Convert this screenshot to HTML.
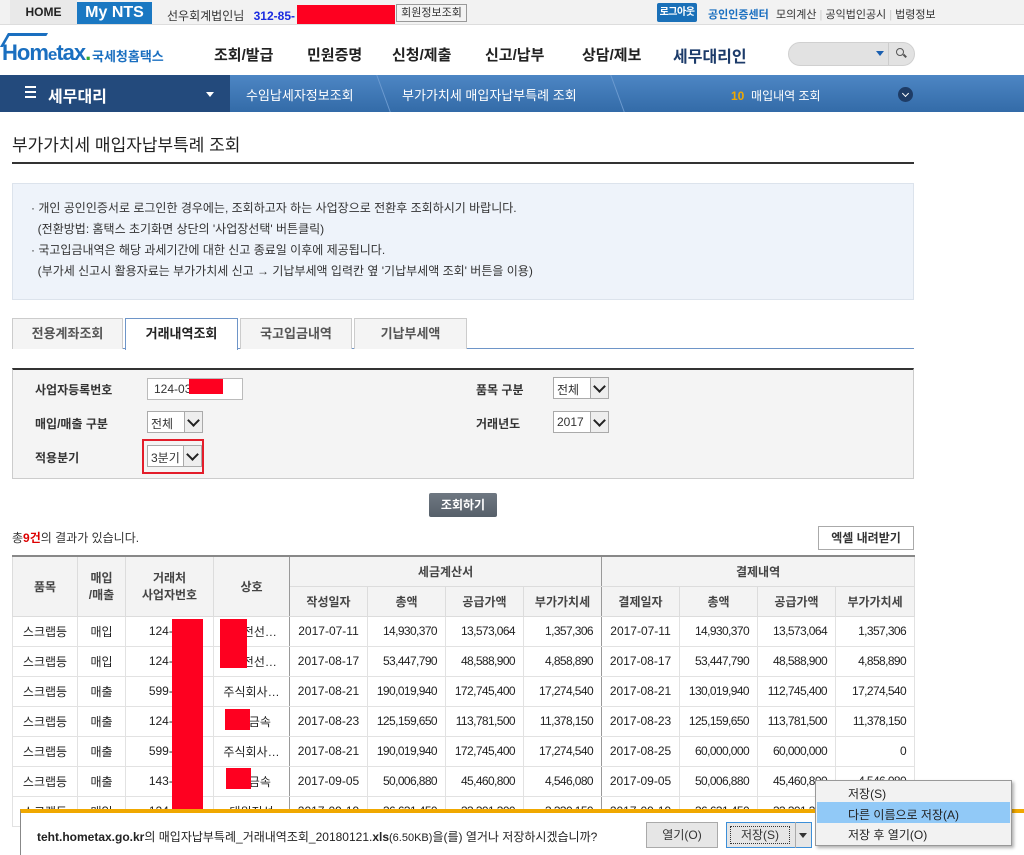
<!DOCTYPE html>
<html><head><meta charset="utf-8"><style>
*{box-sizing:border-box;margin:0;padding:0}
body{width:1024px;height:855px;overflow:hidden;background:#fff;font-family:"Liberation Sans","Noto Sans CJK KR",sans-serif;font-size:12px;color:#333;position:relative}
.a{position:absolute;white-space:nowrap}
.red{position:absolute;background:#fe0020}
table{border-collapse:collapse;position:absolute;left:12px;top:555px;width:902px;table-layout:fixed}
td,th{border:1px solid #e2e2e2;height:30px;font-size:12px;font-weight:normal;text-align:center;color:#222;white-space:nowrap;overflow:hidden}
th{background:#f3f3f3;font-weight:bold;color:#444;border-color:#dcdcdc}
td.r{text-align:right;padding-right:8px;letter-spacing:-0.6px}
.sel{position:absolute;height:22px;border:1px solid #aaa;background:#fff;font-size:12px;padding:3px 0 0 3px}
.sel i{position:absolute;right:0;top:0;width:18px;height:20px;border-left:1px solid #aaa;background:#eee}
.sel i:after{content:"";position:absolute;left:4px;top:4px;width:7px;height:7px;border-right:2px solid #222;border-bottom:2px solid #222;transform:rotate(45deg)}
.tab{position:absolute;top:318px;height:31px;border:1px solid #ccc;border-bottom:none;background:#f4f4f4;font-size:13px;font-weight:bold;color:#555;text-align:center;line-height:30px}
.nav{position:absolute;top:44px;font-size:15px;font-weight:bold;color:#222}
.chev{position:absolute;top:75px;width:14px;height:37px;border-right:1px solid #6d9bd0;transform:skewX(20deg)}
</style></head><body>
<div class="a" style="left:0;top:0;width:1024px;height:25px;background:#f2f2f2;border-bottom:1px solid #ddd"></div>
<div class="a" style="left:10px;top:0;width:67px;height:24px;background:#e9e9e9;font-weight:bold;font-size:12px;line-height:25px;text-align:center;color:#222">HOME</div>
<div class="a" style="left:77px;top:2px;width:75px;height:22px;background:#1a78c2;color:#fff;font-weight:bold;font-size:16px;line-height:22px;text-align:center">My NTS</div>
<div class="a" style="left:167px;top:7px;font-size:12px;color:#333">선우회계법인님 <b style="color:#1a2be0;margin-left:6px">312-85-</b></div>
<div class="red" style="left:297px;top:5px;width:98px;height:19px"></div>
<div class="a" style="left:396px;top:4px;width:71px;height:18px;border:1px solid #999;background:#f3f3f3;font-size:11px;line-height:16px;text-align:center">회원정보조회</div>
<div class="a" style="left:657px;top:3px;width:40px;height:19px;background:#1a70b8;color:#fff;font-size:10px;font-weight:bold;line-height:19px;text-align:center;border-radius:2px;letter-spacing:-0.5px">로그아웃</div>
<div class="a" style="left:708px;top:6px;font-size:11px;font-weight:bold;color:#1a6fc0">공인인증센터</div>
<div class="a" style="left:776px;top:6px;font-size:11px;color:#333">모의계산 <span style="color:#ccc">|</span> 공익법인공시 <span style="color:#ccc">|</span> 법령정보</div>
<div class="a" style="left:4px;top:33px;width:40px;height:14px;border-top:3px solid #1a6fc0;border-left:3px solid #1a6fc0;transform:skewX(-30deg)"></div>
<div class="a" style="left:2px;top:40px;font-size:22px;font-weight:bold;color:#1a6fc0;letter-spacing:-1px">Hom<span style="font-size:17px">e</span>tax<span style="color:#3a3">.</span></div>
<div class="a" style="left:92px;top:46px;font-size:13px;font-weight:bold;color:#1a6fc0">국세청홈택스</div>
<div class="nav" style="left:214px">조회/발급</div>
<div class="nav" style="left:307px">민원증명</div>
<div class="nav" style="left:392px">신청/제출</div>
<div class="nav" style="left:485px">신고/납부</div>
<div class="nav" style="left:582px">상담/제보</div>
<div class="nav" style="left:673px;top:43px;color:#1c3b6a;font-size:16px">세무대리인</div>
<div class="a" style="left:788px;top:42px;width:127px;height:24px;border-radius:12px;background:#e2e2e2;border:1px solid #d0d0d0"></div>
<div class="a" style="left:888px;top:43px;width:1px;height:22px;background:#ccc"></div>
<div class="a" style="left:876px;top:51px;border:4px solid transparent;border-top:5px solid #1a5fb0"></div>
<div class="a" style="left:896px;top:48px;width:8px;height:8px;border:1.5px solid #555;border-radius:50%"></div>
<div class="a" style="left:903px;top:55px;width:4px;height:1.5px;background:#555;transform:rotate(45deg)"></div>
<div class="a" style="left:0;top:75px;width:1024px;height:37px;background:linear-gradient(#4d86c4,#336ba8)"></div>
<div class="a" style="left:0;top:75px;width:230px;height:37px;background:#234a7c"></div>
<div class="chev" style="left:216px;border-color:#234a7c;border-right-width:0"></div>
<div class="chev" style="left:370px"></div>
<div class="chev" style="left:604px"></div>
<div class="a" style="left:25px;top:86px;width:11px;height:12px;border-top:2px solid #fff;border-bottom:2px solid #fff"></div>
<div class="a" style="left:25px;top:91px;width:11px;height:2px;background:#fff"></div>
<div class="a" style="left:48px;top:83px;font-size:16px;font-weight:bold;color:#fff">세무대리</div>
<div class="a" style="left:206px;top:92px;border:4px solid transparent;border-top:5px solid #fff"></div>
<div class="a" style="left:246px;top:85px;font-size:13px;color:#fff">수임납세자정보조회</div>
<div class="a" style="left:402px;top:85px;font-size:13px;color:#fff">부가가치세 매입자납부특례 조회</div>
<div class="a" style="left:731px;top:87px;font-size:12px;color:#fff"><b style="color:#f0a800">10</b>&nbsp; 매입내역 조회</div>
<div class="a" style="left:898px;top:87px;width:15px;height:15px;border-radius:50%;background:#1e3c66"></div>
<div class="a" style="left:903px;top:91px;width:5px;height:5px;border-right:1.5px solid #fff;border-bottom:1.5px solid #fff;transform:rotate(45deg)"></div>
<div class="a" style="left:12px;top:131px;font-size:17px;color:#222">부가가치세 매입자납부특례 조회</div>
<div class="a" style="left:12px;top:162px;width:902px;height:2px;background:#333"></div>
<div class="a" style="left:12px;top:183px;width:902px;height:117px;background:#eef3fa;border:1px solid #dce3ec;font-size:12px;color:#333;line-height:21px;padding:14px 0 0 18px">
· 개인 공인인증서로 로그인한 경우에는, 조회하고자 하는 사업장으로 전환후 조회하시기 바랍니다.<br>
&nbsp; (전환방법: 홈택스 초기화면 상단의 '사업장선택' 버튼클릭)<br>
· 국고입금내역은 해당 과세기간에 대한 신고 종료일 이후에 제공됩니다.<br>
&nbsp; (부가세 신고시 활용자료는 부가가치세 신고 → 기납부세액 입력칸 옆 '기납부세액 조회' 버튼을 이용)</div>
<div class="a" style="left:12px;top:348px;width:902px;height:1px;background:#6e95c8"></div>
<div class="tab" style="left:12px;width:111px">전용계좌조회</div>
<div class="tab" style="left:125px;width:113px;height:32px;background:#fff;border-color:#6e95c8;color:#222">거래내역조회</div>
<div class="tab" style="left:240px;width:112px">국고입금내역</div>
<div class="tab" style="left:354px;width:113px">기납부세액</div>
<div class="a" style="left:12px;top:368px;width:902px;height:111px;background:#f4f4f4;border:1px solid #ccc;border-top:2px solid #333"></div>
<div class="a" style="left:35px;top:381px;font-size:12px;font-weight:bold">사업자등록번호</div>
<div class="a" style="left:147px;top:378px;width:96px;height:22px;border:1px solid #bbb;background:#fff;padding:3px 6px;font-size:12px">124-03-</div>
<div class="red" style="left:189px;top:379px;width:34px;height:15px"></div>
<div class="a" style="left:35px;top:415px;font-size:12px;font-weight:bold">매입/매출 구분</div>
<div class="sel" style="left:147px;top:411px;width:56px">전체<i></i></div>
<div class="a" style="left:35px;top:449px;font-size:12px;font-weight:bold">적용분기</div>
<div class="a" style="left:142px;top:439px;width:62px;height:35px;border:2px solid #e31d2a"></div>
<div class="sel" style="left:147px;top:445px;width:55px">3분기<i></i></div>
<div class="a" style="left:476px;top:381px;font-size:12px;font-weight:bold">품목 구분</div>
<div class="sel" style="left:553px;top:377px;width:56px">전체<i></i></div>
<div class="a" style="left:476px;top:415px;font-size:12px;font-weight:bold">거래년도</div>
<div class="sel" style="left:553px;top:411px;width:56px">2017<i></i></div>
<div class="a" style="left:429px;top:493px;width:68px;height:24px;background:linear-gradient(#6f7882,#56606a);color:#fff;font-size:12px;font-weight:bold;text-align:center;line-height:24px;border-radius:2px">조회하기</div>
<div class="a" style="left:12px;top:529px;font-size:12px">총<b style="color:#d00">9건</b>의 결과가 있습니다.</div>
<div class="a" style="left:818px;top:526px;width:96px;height:24px;border:1px solid #aaa;background:#fff;font-size:12px;font-weight:bold;text-align:center;line-height:22px">엑셀 내려받기</div>
<table>
<colgroup><col style="width:65px"><col style="width:48px"><col style="width:88px"><col style="width:76px"><col style="width:78px"><col style="width:78px"><col style="width:78px"><col style="width:78px"><col style="width:78px"><col style="width:78px"><col style="width:78px"><col style="width:79px"></colgroup>
<tr style="border-top:2px solid #888"><th rowspan="2">품목</th><th rowspan="2">매입<br>/매출</th><th rowspan="2">거래처<br>사업자번호</th><th rowspan="2" style="border-right:1px solid #999">상호</th><th colspan="4" style="border-right:1px solid #999">세금계산서</th><th colspan="4">결제내역</th></tr>
<tr><th>작성일자</th><th>총액</th><th>공급가액</th><th style="border-right:1px solid #999">부가가치세</th><th>결제일자</th><th>총액</th><th>공급가액</th><th>부가가치세</th></tr>
<tr style="border-top:1px solid #999"><td>스크랩등</td><td>매입</td><td>124-81-</td><td style="border-right:1px solid #999">&nbsp;&nbsp;&nbsp;&nbsp;&nbsp;전선…</td><td>2017-07-11</td><td class="r">14,930,370</td><td class="r">13,573,064</td><td class="r" style="border-right:1px solid #999">1,357,306</td><td>2017-07-11</td><td class="r">14,930,370</td><td class="r">13,573,064</td><td class="r">1,357,306</td></tr>
<tr><td>스크랩등</td><td>매입</td><td>124-81-</td><td style="border-right:1px solid #999">&nbsp;&nbsp;&nbsp;&nbsp;&nbsp;전선…</td><td>2017-08-17</td><td class="r">53,447,790</td><td class="r">48,588,900</td><td class="r" style="border-right:1px solid #999">4,858,890</td><td>2017-08-17</td><td class="r">53,447,790</td><td class="r">48,588,900</td><td class="r">4,858,890</td></tr>
<tr><td>스크랩등</td><td>매출</td><td>599-87-</td><td style="border-right:1px solid #999">주식회사…</td><td>2017-08-21</td><td class="r">190,019,940</td><td class="r">172,745,400</td><td class="r" style="border-right:1px solid #999">17,274,540</td><td>2017-08-21</td><td class="r">130,019,940</td><td class="r">112,745,400</td><td class="r">17,274,540</td></tr>
<tr><td>스크랩등</td><td>매출</td><td>124-01-</td><td style="border-right:1px solid #999">&nbsp;&nbsp;&nbsp;&nbsp;&nbsp;금속</td><td>2017-08-23</td><td class="r">125,159,650</td><td class="r">113,781,500</td><td class="r" style="border-right:1px solid #999">11,378,150</td><td>2017-08-23</td><td class="r">125,159,650</td><td class="r">113,781,500</td><td class="r">11,378,150</td></tr>
<tr><td>스크랩등</td><td>매출</td><td>599-87-</td><td style="border-right:1px solid #999">주식회사…</td><td>2017-08-21</td><td class="r">190,019,940</td><td class="r">172,745,400</td><td class="r" style="border-right:1px solid #999">17,274,540</td><td>2017-08-25</td><td class="r">60,000,000</td><td class="r">60,000,000</td><td class="r">0</td></tr>
<tr><td>스크랩등</td><td>매출</td><td>143-01-</td><td style="border-right:1px solid #999">&nbsp;&nbsp;&nbsp;&nbsp;&nbsp;금속</td><td>2017-09-05</td><td class="r">50,006,880</td><td class="r">45,460,800</td><td class="r" style="border-right:1px solid #999">4,546,080</td><td>2017-09-05</td><td class="r">50,006,880</td><td class="r">45,460,800</td><td class="r">4,546,080</td></tr>
<tr><td>스크랩등</td><td>매입</td><td>124-81-</td><td style="border-right:1px solid #999">대원전선</td><td>2017-09-19</td><td class="r">36,631,450</td><td class="r">33,301,300</td><td class="r" style="border-right:1px solid #999">3,330,150</td><td>2017-09-19</td><td class="r">36,631,450</td><td class="r">33,301,300</td><td class="r">3,330,150</td></tr>
</table>
<div class="red" style="left:172px;top:619px;width:31px;height:196px"></div>
<div class="red" style="left:220px;top:619px;width:27px;height:49px"></div>
<div class="red" style="left:225px;top:709px;width:25px;height:21px"></div>
<div class="red" style="left:226px;top:768px;width:25px;height:21px"></div>
<div class="a" style="left:20px;top:809px;width:1004px;height:46px;background:#fff;border-top:4px solid #f0a800;border-left:1px solid #888"></div>
<div class="a" style="left:37px;top:828px;font-size:12px;color:#222"><b>teht.hometax.go.kr</b>의 매입자납부특례_거래내역조회_20180121.<b>xls</b><span style="font-size:11px">(6.50KB)</span>을(를) 열거나 저장하시겠습니까?</div>
<div class="a" style="left:646px;top:822px;width:72px;height:26px;border:1px solid #aaa;background:#e6e6e6;text-align:center;line-height:24px;font-size:12px">열기(O)</div>
<div class="a" style="left:726px;top:822px;width:86px;height:26px;border:1px solid #3c8fd8;background:#e6e6e6"></div>
<div class="a" style="left:730px;top:826px;width:60px;height:18px;border:1px dotted #333;text-align:center;line-height:16px;font-size:12px">저장(S)</div>
<div class="a" style="left:795px;top:822px;width:1px;height:26px;background:#aaa"></div>
<div class="a" style="left:799px;top:833px;border:4px solid transparent;border-top:5px solid #333"></div>
<div class="a" style="left:815px;top:780px;width:197px;height:66px;background:#f2f2f2;border:1px solid #999;box-shadow:2px 2px 3px rgba(0,0,0,.3)"></div>
<div class="a" style="left:817px;top:802px;width:193px;height:21px;background:#91c9f7"></div>
<div class="a" style="left:848px;top:785px;font-size:12px;color:#222">저장(S)</div>
<div class="a" style="left:848px;top:806px;font-size:12px;color:#222">다른 이름으로 저장(A)</div>
<div class="a" style="left:848px;top:826px;font-size:12px;color:#222">저장 후 열기(O)</div>
</body></html>
